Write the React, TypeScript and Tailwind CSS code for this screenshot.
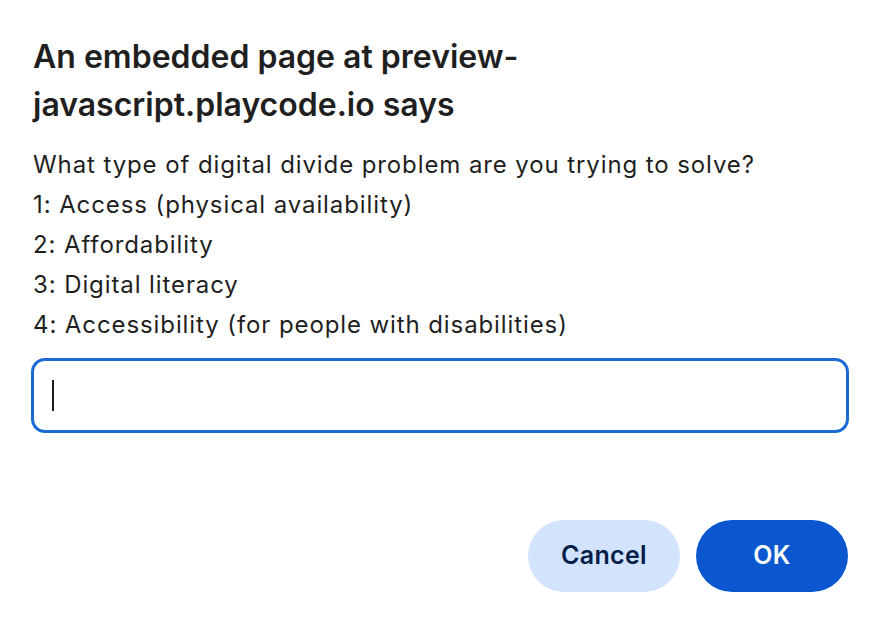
export default function App() {
  return (
    <div className="w-[882px] h-[620px] bg-white font-['Inter',sans-serif] text-[#1f1f1f] pl-[33px] pr-[33px] pt-[33px]">
      <h1 className="text-[32px] leading-[48px] font-semibold w-[520px]">
        An embedded page at preview-javascript.playcode.io says
      </h1>
      <div className="mt-[16px] text-[24px] leading-[40px] tracking-[0.9px]">
        <p>What type of digital divide problem are you trying to solve?</p>
        <p>1: Access (physical availability)</p>
        <p>2: Affordability</p>
        <p>3: Digital literacy</p>
        <p>4: Accessibility (for people with disabilities)</p>
      </div>
      <div className="mt-[13px] -ml-[2px] w-[818px] h-[75px] rounded-[14px] border-[3px] border-[#1a6ad6] flex items-center pl-[18px]">
        <span className="w-[2px] h-[31px] bg-[#1f1f1f]" />
      </div>
      <div className="mt-[87px] flex justify-end gap-[16px] mr-[1px]">
        <button className="w-[152px] h-[72px] rounded-full bg-[#d3e3fd] text-[#041e49] text-[25px] font-semibold tracking-[0.3px]">
          Cancel
        </button>
        <button className="w-[152px] h-[72px] rounded-full bg-[#0b57d0] text-white text-[25px] font-semibold tracking-[0.3px]">
          OK
        </button>
      </div>
    </div>
  );
}
